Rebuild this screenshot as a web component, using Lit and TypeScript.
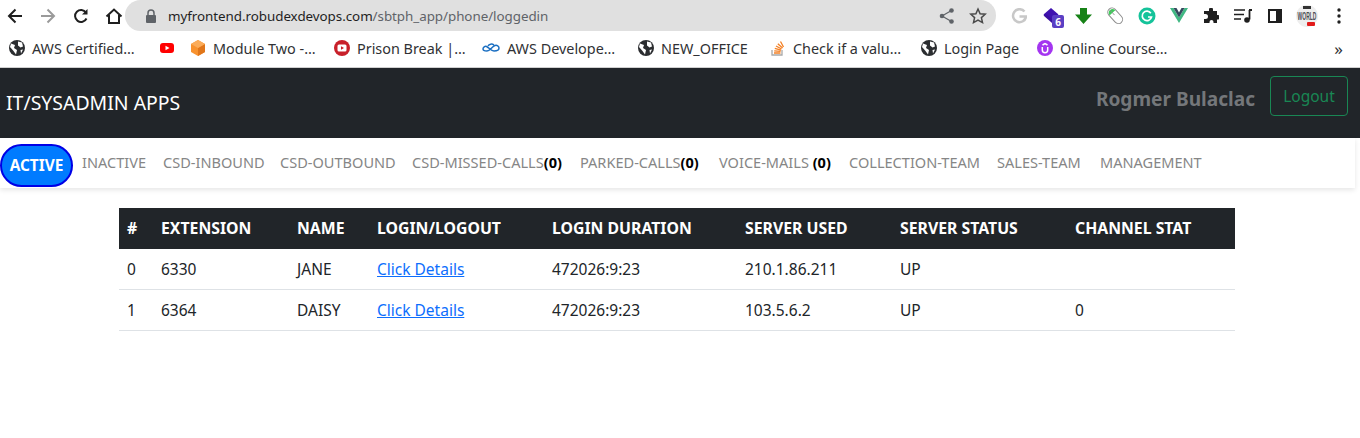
import { LitElement, html, css, svg } from "lit";
import { customElement } from "lit/decorators.js";

const globe = svg`<svg width="16" height="16" viewBox="0 0 16 16"><circle cx="8" cy="8" r="8" fill="#2b2d30"/><path d="M2 3.500 6 5 5 8l3 2-1 4.500L4.500 11 1 7zM9 1.500l4 1 1 4-2.500 1L9 5.500zM11.500 10l2.500-.5-2 4z" fill="#fff"/></svg>`;

const bookmarks = [
  { w: 150, icon: globe, text: "AWS Certified…" },
  { w: 31, icon: svg`<svg width="16" height="16" viewBox="0 0 16 16"><rect x="1" y="3" width="14" height="10" rx="3" fill="#f00"/><path d="M6.500 5.700v4.600L10.500 8z" fill="#fff"/></svg>`, text: "" },
  { w: 144, icon: svg`<svg width="16" height="16" viewBox="0 0 16 16"><path d="M8 0l7 4v8l-7 4-7-4V4z" fill="#f8922e"/><path d="M8 8l7-4v8l-7 4z" fill="#e0761a"/><path d="M8 8L1 4l7-4 7 4z" fill="#fbac5a"/></svg>`, text: "Module Two -…" },
  { w: 148, icon: svg`<svg width="16" height="16" viewBox="0 0 16 16"><circle cx="8" cy="8" r="8" fill="#c8202a"/><rect x="3.500" y="4.500" width="9" height="7" rx="1.500" fill="#fff"/><path d="M7 6.200v3.600L10 8z" fill="#c8202a"/></svg>`, text: "Prison Break |…" },
  { w: 156, icon: svg`<svg width="18" height="16" viewBox="0 0 18 16"><path d="M1 9c0-2 2-3 3.500-2.500C7 7.500 9 11 12 11c3 0 5-1 5-3s-2-3-4-2.500C10 6.500 8 11 5 11c-2 0-4-.5-4-2z M6 6c1-2 4-2.500 6-1" fill="none" stroke="#1b6fc2" stroke-width="1.500"/></svg>`, text: "AWS Develope…" },
  { w: 132, icon: globe, text: "NEW_OFFICE" },
  { w: 151, icon: svg`<svg width="16" height="16" viewBox="0 0 16 16"><path d="M2 10v5h10v-5" fill="none" stroke="#a8a8a8" stroke-width="1.300"/><path d="M4 13h6.500M4.200 10.800l6.400.6M4.800 8.400l6.200 1.700M6 6l5.600 3M7.800 3.700l4.800 4.300M10.500 1.500l3 5.500" stroke="#f48024" stroke-width="1.300" fill="none"/></svg>`, text: "Check if a valu…" },
  { w: 116, icon: globe, text: "Login Page" },
  { w: 200, icon: svg`<svg width="16" height="16" viewBox="0 0 16 16"><circle cx="8" cy="8" r="8" fill="#a435f0"/><path d="M5.300 7v3a2.700 2.700 0 0 0 5.400 0V7M5.500 5L8 3.500 10.500 5" fill="none" stroke="#fff" stroke-width="1.500"/></svg>`, text: "Online Course…" },
];

const columns = ["#", "EXTENSION", "NAME", "LOGIN/LOGOUT", "LOGIN DURATION", "SERVER USED", "SERVER STATUS", "CHANNEL STAT"];
const rows = [
  { id: 0, ext: "6330", name: "JANE", dur: "472026:9:23", server: "210.1.86.211", status: "UP", chan: "" },
  { id: 1, ext: "6364", name: "DAISY", dur: "472026:9:23", server: "103.5.6.2", status: "UP", chan: "0" },
];
const colWidths = [34, 136, 80, 175, 193, 155, 175, 168];

const tabs: { w: number; t: string; c?: string }[] = [
  { w: 81, t: "INACTIVE" },
  { w: 117, t: "CSD-INBOUND" },
  { w: 132, t: "CSD-OUTBOUND" },
  { w: 168, t: "CSD-MISSED-CALLS", c: "(0)" },
  { w: 139, t: "PARKED-CALLS", c: "(0)" },
  { w: 130, t: "VOICE-MAILS ", c: "(0)" },
  { w: 148, t: "COLLECTION-TEAM" },
  { w: 103, t: "SALES-TEAM" },
  { w: 120, t: "MANAGEMENT" },
];

@customElement("app-root")
export class AppRoot extends LitElement {
  static styles = css`
    :host { display: block; width: 1360px; height: 438px; overflow: hidden; background: #fff; font-family: "Noto Sans", sans-serif; }
    .toolbar { display: flex; align-items: center; height: 31px; background: #fff; }
    .nav-btns { display: flex; width: 127px; margin-left: -2px; flex: none; }
    .nav-btn { flex: none; width: 33px; height: 31px; display: flex; align-items: center; justify-content: center; }
    .omni { width: 871px; height: 31px; background: #e0e0e0; border-radius: 16px; display: flex; align-items: center; padding-left: 20px; box-sizing: border-box; font-size: 13.4px; letter-spacing: -0.05px; flex: none; position: relative; }
    .lock { width: 23px; display: flex; }
    .host { color: #1f1f1f; }
    .path { color: #5f6368; }
    .omni-end { margin-left: auto; display: flex; align-items: center; gap: 14px; padding-right: 9px; }
    .exts { display: flex; margin-left: 7px; }
    .ext { width: 32px; height: 31px; display: flex; align-items: center; justify-content: center; position: relative; }
    .badge { position: absolute; left: 17px; top: 15px; width: 12px; height: 13px; background: #5b3fc4; color: #fff; font-size: 10px; font-weight: 700; border-radius: 2px; display: flex; align-items: center; justify-content: center; line-height: 1; }
    .bookmarks { display: flex; align-items: center; height: 37px; border-bottom: 1px solid #d0d0d0; padding: 0 0 2px 9px; box-sizing: border-box; }
    .bm { display: flex; align-items: center; gap: 7px; font-size: 14.4px; color: #303134; white-space: nowrap; flex: none; }
    .more { margin-left: auto; margin-right: 17px; font-size: 17px; color: #303134; line-height: 1; }
    .navbar { height: 70px; background: #212529; display: flex; align-items: center; padding: 0 12px 0 6px; box-sizing: border-box; }
    .brand { color: #fff; font-size: 19.45px; margin-bottom: 1px; }
    .right { margin-left: auto; display: flex; align-items: center; gap: 15px; margin-bottom: 14px; }
    .user { color: #74777a; font-size: 19.1px; font-weight: 700; margin-top: 6px; }
    .logout { width: 78px; height: 40px; box-sizing: border-box; border: 1px solid #198754; border-radius: 4px; color: #198754; background: transparent; font: inherit; font-size: 15.5px; padding: 0; }
    .tabs { height: 50px; display: flex; align-items: flex-start; width: 1355px; box-shadow: 0 2px 5px rgba(0,0,0,.1); background: #fff; }
    .pill { flex: none; width: 73px; height: 43px; margin-top: 6px; margin-right: 9px; padding-bottom: 1px; box-sizing: border-box; background: #007bff; border: 2px solid #0000e6; border-radius: 22px; color: #fff; font-weight: 700; font-size: 15.4px; display: flex; align-items: center; justify-content: center; }
    .tab { flex: none; color: #868686; font-size: 14.55px; height: 50px; line-height: 48px; white-space: pre; }
    .tab b { color: #000; font-weight: 700; }
    .wrap { padding: 20px 125px 0 119px; }
    table { border-collapse: separate; border-spacing: 0; table-layout: fixed; width: 1116px; font-size: 15.5px; color: #212529; }
    th { background: #212529; color: #fff; height: 41px; padding: 0 8px 1px; text-align: left; font-weight: 700; font-size: 15.8px; box-sizing: border-box; white-space: nowrap; }
    td { height: 41px; padding: 0 8px; border-bottom: 1px solid #dee2e6; box-sizing: border-box; white-space: nowrap; }
    a { color: #0d6efd; text-decoration: underline; }
  `;

  render() {
    return html`
      <div class="toolbar">
        <div class="nav-btns">
          <div class="nav-btn"><svg width="16" height="16" viewBox="0 0 16 16"><path d="M15 8H2.500M8.500 1.500 2 8l6.500 6.500" fill="none" stroke="#1f1f1f" stroke-width="2"/></svg></div>
          <div class="nav-btn"><svg width="16" height="16" viewBox="0 0 16 16"><path d="M1 8h12.500M7.500 1.500 14 8l-6.500 6.500" fill="none" stroke="#9a9a9a" stroke-width="2"/></svg></div>
          <div class="nav-btn"><svg width="16" height="16" viewBox="0 0 16 16"><path d="M13.500 10.500A6 6 0 1 1 13 4.500" fill="none" stroke="#1f1f1f" stroke-width="2"/><path d="M14.500 1v5.500H9z" fill="#1f1f1f"/></svg></div>
          <div class="nav-btn"><svg width="18" height="18" viewBox="0 0 18 18"><path d="M1.500 9.500 9 2.500l7.500 7M4 8v8h10V8" fill="none" stroke="#1f1f1f" stroke-width="2"/></svg></div>
        </div>
        <div class="omni">
          <span class="lock"><svg width="12" height="14" viewBox="0 0 12 14"><path d="M3 6V4a3 3 0 0 1 6 0v2" fill="none" stroke="#5f6368" stroke-width="1.500"/><rect x="1" y="6" width="10" height="8" rx="1" fill="#5f6368"/></svg></span>
          <span class="host">myfrontend.robudexdevops.com</span><span class="path">/sbtph_app/phone/loggedin</span>
          <span class="omni-end">
            <svg width="16" height="16" viewBox="0 0 16 16"><circle cx="3" cy="8" r="2.300" fill="#5f6368"/><circle cx="12.500" cy="2.500" r="2.300" fill="#5f6368"/><circle cx="12.500" cy="13.500" r="2.300" fill="#5f6368"/><path d="M12.500 2.500 3 8l9.500 5.500" fill="none" stroke="#5f6368" stroke-width="1.200"/></svg>
            <svg width="18" height="18" viewBox="0 0 18 18"><path d="M9 2l2.100 4.700 5.100.5-3.800 3.400 1.100 5L9 13l-4.500 2.600 1.100-5L1.800 7.200l5.100-.5z" fill="none" stroke="#4a4a4a" stroke-width="1.500"/></svg>
          </span>
        </div>
        <div class="exts">
          <div class="ext"><svg width="16" height="16" viewBox="0 0 16 16"><path d="M13.500 3.500A6.500 6.500 0 1 0 15 8.500H8.500" fill="none" stroke="#c8c8c8" stroke-width="2.500"/></svg></div>
          <div class="ext"><svg width="18" height="18" viewBox="0 0 18 18"><path d="M9 1l7.500 6.500L9 13.500 1.500 7.500z" fill="#3f12b0"/><path d="M1.500 8.500 10 16l2-2-8-7z" fill="#3a10a0"/></svg><span class="badge">6</span></div>
          <div class="ext"><svg width="17" height="16" viewBox="0 0 17 16"><path d="M5 0h7v6.500h5L8.500 16 0 6.500h5z" fill="#178217"/></svg></div>
          <div class="ext"><svg width="18" height="18" viewBox="0 0 18 18"><g transform="rotate(-42 9 9)"><rect x="5" y="0" width="8.500" height="18" rx="4.250" fill="#fff" stroke="#8c8c8c" stroke-width="1"/><path d="M5.500 5V4.500a3.800 3.800 0 0 1 7.500 0V5z" fill="#3ecb5a"/><path d="M9.250 1v7" stroke="#8c8c8c" stroke-width=".8"/></g></svg></div>
          <div class="ext"><svg width="18" height="18" viewBox="0 0 18 18"><circle cx="9" cy="9" r="8.500" fill="#15c39a"/><path d="M12.800 6.200A4.700 4.700 0 1 0 13.500 10H10" fill="none" stroke="#fff" stroke-width="1.700"/></svg></div>
          <div class="ext"><svg width="18" height="15" viewBox="0 0 18 15"><path d="M0 0h3.500L9 9.500 14.500 0H18L9 15z" fill="#41b883"/><path d="M3.500 0h3L9 4.500 11.500 0h3L9 9.500z" fill="#35495e"/></svg></div>
          <div class="ext"><svg width="16" height="16" viewBox="0 0 16 16"><path d="M6 1.500a2 2 0 0 1 4 0V3h4v4h1a2.200 2.200 0 0 1 0 4.500h-1V15h-3.500v-1a2 2 0 0 0-4 0v1H1v-4h1.500a2.500 2.500 0 0 0 0-5H1V3h5z" fill="#1f1f1f"/></svg></div>
          <div class="ext"><svg width="18" height="14" viewBox="0 0 18 14"><path d="M0 1h11M0 5.500h10M0 10h7" stroke="#1f1f1f" stroke-width="1.500"/><path d="M15.500 1v9.500" stroke="#1f1f1f" stroke-width="1.800"/><path d="M15 0h3v2h-3z" fill="#1f1f1f"/><circle cx="13" cy="11" r="2.800" fill="#1f1f1f"/></svg></div>
          <div class="ext"><svg width="14" height="14" viewBox="0 0 14 14"><path fill-rule="evenodd" d="M0 0h14v14H0zM2 2v10h6V2z" fill="#1f1f1f"/></svg></div>
          <div class="ext"><svg width="22" height="24" viewBox="0 0 22 24"><circle cx="11" cy="12" r="11" fill="#eeeeee"/><rect x="7" y="2" width="8" height="3" fill="#333"/><g transform="translate(11 15.500) scale(1 2)"><text text-anchor="middle" font-family="Liberation Sans" font-size="5" font-weight="700" fill="#4a4d52">WORLD</text></g><rect x="11" y="18" width="8" height="4" rx="1" fill="#e21b1b"/></svg></div>
          <div class="ext"><svg width="4" height="16" viewBox="0 0 4 16"><circle cx="2" cy="2" r="1.700" fill="#1f1f1f"/><circle cx="2" cy="8" r="1.700" fill="#1f1f1f"/><circle cx="2" cy="14" r="1.700" fill="#1f1f1f"/></svg></div>
        </div>
      </div>
      <div class="bookmarks">
        ${bookmarks.map((b) => html`<div class="bm" style="width:${b.w}px">${b.icon}${b.text ? html`<span>${b.text}</span>` : ""}</div>`)}
        <span class="more">»</span>
      </div>
      <div class="navbar">
        <span class="brand">IT/SYSADMIN APPS</span>
        <div class="right">
          <span class="user">Rogmer Bulaclac</span>
          <button class="logout">Logout</button>
        </div>
      </div>
      <div class="tabs">
        <div class="pill">ACTIVE</div>
        ${tabs.map((t) => html`<div class="tab" style="width:${t.w}px">${t.t}${t.c ? html`<b>${t.c}</b>` : ""}</div>`)}
      </div>
      <div class="wrap">
        <table>
          <colgroup>${colWidths.map((w) => html`<col style="width:${w}px" />`)}</colgroup>
          <thead><tr>${columns.map((c) => html`<th>${c}</th>`)}</tr></thead>
          <tbody>
            ${rows.map((r) => html`<tr>
              <td>${r.id}</td><td>${r.ext}</td><td>${r.name}</td>
              <td><a href="#">Click Details</a></td>
              <td>${r.dur}</td><td>${r.server}</td><td>${r.status}</td><td>${r.chan}</td>
            </tr>`)}
          </tbody>
        </table>
      </div>
    `;
  }
}
